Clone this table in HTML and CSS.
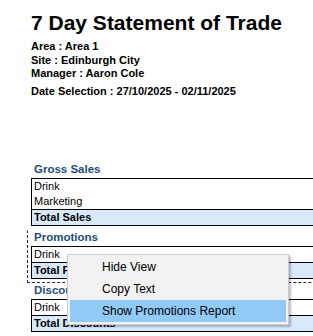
FILE: index.html
```html
<!DOCTYPE html>
<html>
<head>
<meta charset="utf-8">
<link rel="stylesheet" href="styles.css">
</head>
<body>
<div class="report">
  <h1 class="title">7 Day Statement of Trade</h1>
  <div class="meta">
    <div>Area : Area 1</div>
    <div>Site : Edinburgh City</div>
    <div>Manager : Aaron Cole</div>
  </div>
  <div class="dates">Date Selection : 27/10/2025 - 02/11/2025</div>
  <div class="sections">
    <section class="group">
      <div class="group-title">Gross Sales</div>
      <div class="table">
        <div class="row">Drink</div>
        <div class="row">Marketing</div>
        <div class="row total">Total Sales</div>
      </div>
    </section>
    <section class="group focused">
      <div class="group-title">Promotions</div>
      <div class="table">
        <div class="row">Drink</div>
        <div class="row total">Total Promotions</div>
      </div>
    </section>
    <section class="group">
      <div class="group-title">Discounts</div>
      <div class="table">
        <div class="row">Drink</div>
        <div class="row total">Total Discounts</div>
      </div>
    </section>
  </div>
</div>
<div class="context-menu">
  <div class="menu-item">Hide View</div>
  <div class="menu-item">Copy Text</div>
  <div class="menu-item active">Show Promotions Report</div>
</div>
</body>
</html>
```

FILE: styles.css
```css
html, body {
  margin: 0;
  padding: 0;
  overflow: hidden;
  background: #ffffff;
}
body {
  font-family: "Liberation Sans", Arial, sans-serif;
  color: #000000;
  width: 313px;
  height: 336px;
  position: relative;
}
.report {
  padding-left: 31px;
}
.title {
  margin: 11px 0 5px;
  font-size: 21px;
  line-height: 24px;
  font-weight: bold;
}
.meta {
  font-size: 11px;
  font-weight: bold;
  line-height: 13.5px;
}
.dates {
  margin-top: 4px;
  font-size: 11px;
  font-weight: bold;
  line-height: 13.5px;
}
.sections {
  margin-top: 64px;
  margin-left: -4px;
  width: 420px;
}
.group {
  border: 1px solid transparent;
  padding: 0 0 3px 3px;
}
.group.focused {
  border-style: dashed;
  border-color: transparent #1a237e #1a237e #1a237e;
}
.group-title {
  font-size: 11.5px;
  font-weight: bold;
  color: #1f4e79;
  line-height: 13px;
  padding: 0 0 2px 3px;
}
.table {
  border-top: 1px solid #000000;
  border-left: 1px solid #000000;
}
.row {
  font-size: 11px;
  line-height: 15px;
  padding-left: 2px;
}
.row.total {
  font-weight: bold;
  background: #dae8fc;
  border-top: 1px solid #000000;
  border-bottom: 1px solid #000000;
}
.context-menu {
  position: absolute;
  left: 67px;
  top: 254px;
  width: 222px;
  box-sizing: border-box;
  border: 1px solid #cccccc;
  background: #f2f2f2;
  padding: 1px 2px 2px;
  box-shadow: 2px 2px 2px rgba(0, 0, 0, 0.25);
  font-family: "Liberation Sans", Arial, sans-serif;
  font-size: 12px;
}
.menu-item {
  height: 22px;
  line-height: 22px;
  padding-left: 32px;
  color: #000000;
}
.menu-item.active {
  background: #91c9f7;
}
```
